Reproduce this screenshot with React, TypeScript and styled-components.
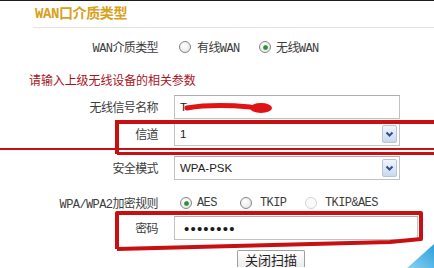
import styled, { createGlobalStyle } from "styled-components"

const GlobalStyle = createGlobalStyle`
  html, body {
    margin: 0;
    padding: 0;
    background: #fff;
  }
`

const Page = styled.div`
  position: relative;
  width: 434px;
  height: 268px;
  overflow: hidden;
  box-sizing: border-box;
  border-top: 1px solid #1c1c1c;
  background: #fff;
  font-family: "Liberation Mono", "Noto Sans CJK SC", monospace;
  font-size: 12px;
  letter-spacing: -0.6px;
  color: #3d3d3d;
`

const Header = styled.div`
  margin-left: 33px;
  height: 26px;
  border-bottom: 1px solid #e4e4e4;
`

const Title = styled.h1`
  margin: 0;
  padding-left: 2px;
  font-size: 14px;
  line-height: 26px;
  font-weight: bold;
  letter-spacing: -0.4px;
  color: #d8a11c;
`

const Form = styled.div`
  display: flex;
  flex-direction: column;
`

const Row = styled.div<{ $top: number; $h?: number }>`
  display: grid;
  grid-template-columns: 158px 1fr;
  column-gap: 16px;
  align-items: center;
  height: ${(p) => p.$h ?? 24}px;
  margin-top: ${(p) => p.$top}px;
`

const Label = styled.div`
  text-align: right;
  white-space: nowrap;
`

const Hint = styled.div`
  margin-top: 13px;
  padding-left: 29px;
  height: 16px;
  line-height: 16px;
  font-family: "Noto Sans CJK SC", sans-serif;
  letter-spacing: -0.1px;
  color: #a8151d;
`

const Field = styled.div<{ $w: number }>`
  display: flex;
  align-items: center;
  justify-content: space-between;
  box-sizing: border-box;
  width: ${(p) => p.$w}px;
  height: 24px;
  padding-left: 5px;
  border: 1px solid #c2c2c2;
  border-top-color: #adadad;
  background: #fff;
  font-family: "Liberation Sans", "Noto Sans CJK SC", sans-serif;
  font-size: 11.5px;
  letter-spacing: 0;
  color: #222;
`

const Dots = styled.span`
  font-size: 15px;
  letter-spacing: 1.2px;
  padding-left: 4px;
  color: #1a1a1a;
`

const DropButton = styled.span`
  display: flex;
  align-items: center;
  justify-content: center;
  box-sizing: border-box;
  width: 15px;
  height: 18px;
  margin-right: 2px;
  border: 1px solid #b5c5dd;
  border-radius: 2px;
  background: linear-gradient(#f1f5fc, #cbd9ee);
`

const Radios = styled.div`
  display: flex;
  align-items: center;
`

const Option = styled.label<{ $w: number; $pad: number }>`
  display: flex;
  align-items: center;
  gap: ${(p) => p.$pad}px;
  width: ${(p) => p.$w}px;
  white-space: nowrap;
`

const RadioDot = styled.span<{ $on?: boolean; $faint?: boolean }>`
  position: relative;
  box-sizing: border-box;
  width: 12px;
  height: 12px;
  flex: none;
  border-radius: 50%;
  border: 1px solid ${(p) => (p.$faint ? "#d4d4d4" : "#858585")};
  background: ${(p) =>
    p.$faint ? "#fafafa" : "radial-gradient(circle at 40% 35%, #fff, #e2e2e2)"};

  &::after {
    content: "";
    display: ${(p) => (p.$on ? "block" : "none")};
    position: absolute;
    left: 2.5px;
    top: 2.5px;
    width: 5px;
    height: 5px;
    border-radius: 50%;
    background: radial-gradient(circle, #2f8f35 45%, #9fd3a0);
  }
`

const ButtonRow = styled.div`
  display: flex;
  margin-top: 10px;
  padding-left: 237px;
`

const Button = styled.button`
  box-sizing: border-box;
  width: 68px;
  height: 17px;
  padding: 2px 0 0;
  border: 1px solid #9f9f9f;
  border-bottom: none;
  border-radius: 2px 2px 0 0;
  background: linear-gradient(#ffffff, #ececec);
  font-family: "Noto Sans CJK SC", sans-serif;
  font-size: 13px;
  line-height: 14px;
  color: #222;
`

const Overlay = styled.svg`
  position: absolute;
  left: 0;
  top: 0;
  pointer-events: none;
`

function Chevron() {
  return (
    <svg width="9" height="7" viewBox="0 0 9 7">
      <path d="M1.5 1.5 L4.5 4.5 L7.5 1.5" fill="none" stroke="#30508f" strokeWidth="2" />
    </svg>
  )
}

function Select({ value }: { value: string }) {
  return (
    <Field $w={226}>
      <span>{value}</span>
      <DropButton><Chevron /></DropButton>
    </Field>
  )
}

export default function App() {
  return (
    <>
      <GlobalStyle />
      <Page>
        <Header>
          <Title>WAN口介质类型</Title>
        </Header>

        <Form>
          <Row $top={7}>
            <Label>WAN介质类型</Label>
            <Radios style={{ paddingLeft: 5 }}>
              <Option $w={80} $pad={6}><RadioDot />有线WAN</Option>
              <Option $w={80} $pad={5}><RadioDot $on />无线WAN</Option>
            </Radios>
          </Row>

          <Hint>请输入上级无线设备的相关参数</Hint>

          <Row $top={7}>
            <Label>无线信号名称</Label>
            <Field $w={226}><span>T</span></Field>
          </Row>

          <Row $top={3}>
            <Label>信道</Label>
            <Select value="1" />
          </Row>

          <Row $top={10}>
            <Label>安全模式</Label>
            <Select value="WPA-PSK" />
          </Row>

          <Row $top={11}>
            <Label>WPA/WPA2加密规则</Label>
            <Radios style={{ paddingLeft: 6 }}>
              <Option $w={60} $pad={5}><RadioDot $on />AES</Option>
              <Option $w={65} $pad={8}><RadioDot />TKIP</Option>
              <Option $w={80} $pad={8}><RadioDot $faint />TKIP&amp;AES</Option>
            </Radios>
          </Row>

          <Row $top={1}>
            <Label>密码</Label>
            <Field $w={244}><Dots>••••••••</Dots></Field>
          </Row>

          <ButtonRow>
            <Button>关闭扫描</Button>
          </ButtonRow>
        </Form>

        <Overlay width="434" height="268" viewBox="0 0 434 268">
          <defs>
            <linearGradient id="corner" x1="0" y1="1" x2="1" y2="0">
              <stop offset="0" stopColor="#8fd3f3" />
              <stop offset="1" stopColor="#2b9fdc" />
            </linearGradient>
          </defs>

          {/* scribble hiding the SSID */}
          <path d="M187 107 C205 104 228 104 250 106" stroke="#e01414" strokeWidth="5" fill="none" strokeLinecap="round" />
          <ellipse cx="261" cy="107" rx="11" ry="5" fill="#e01414" />

          {/* box around channel */}
          <path d="M117 153 L117 121 L434 121" stroke="#c81010" strokeWidth="4" fill="none" />
          <path d="M0 148 L434 148" stroke="#c81010" strokeWidth="2" />
          <path d="M117 152.5 L434 152.5" stroke="#c81010" strokeWidth="3" />

          {/* box around password */}
          <path d="M117 248 L117 212 L421 212 L421 238 L390 241 L117 248" stroke="#c81010" strokeWidth="4" fill="none" strokeLinejoin="round" />

          {/* decorative corner */}
          <polygon points="406,268 434,268 434,243" fill="url(#corner)" />
        </Overlay>
      </Page>
    </>
  )
}
